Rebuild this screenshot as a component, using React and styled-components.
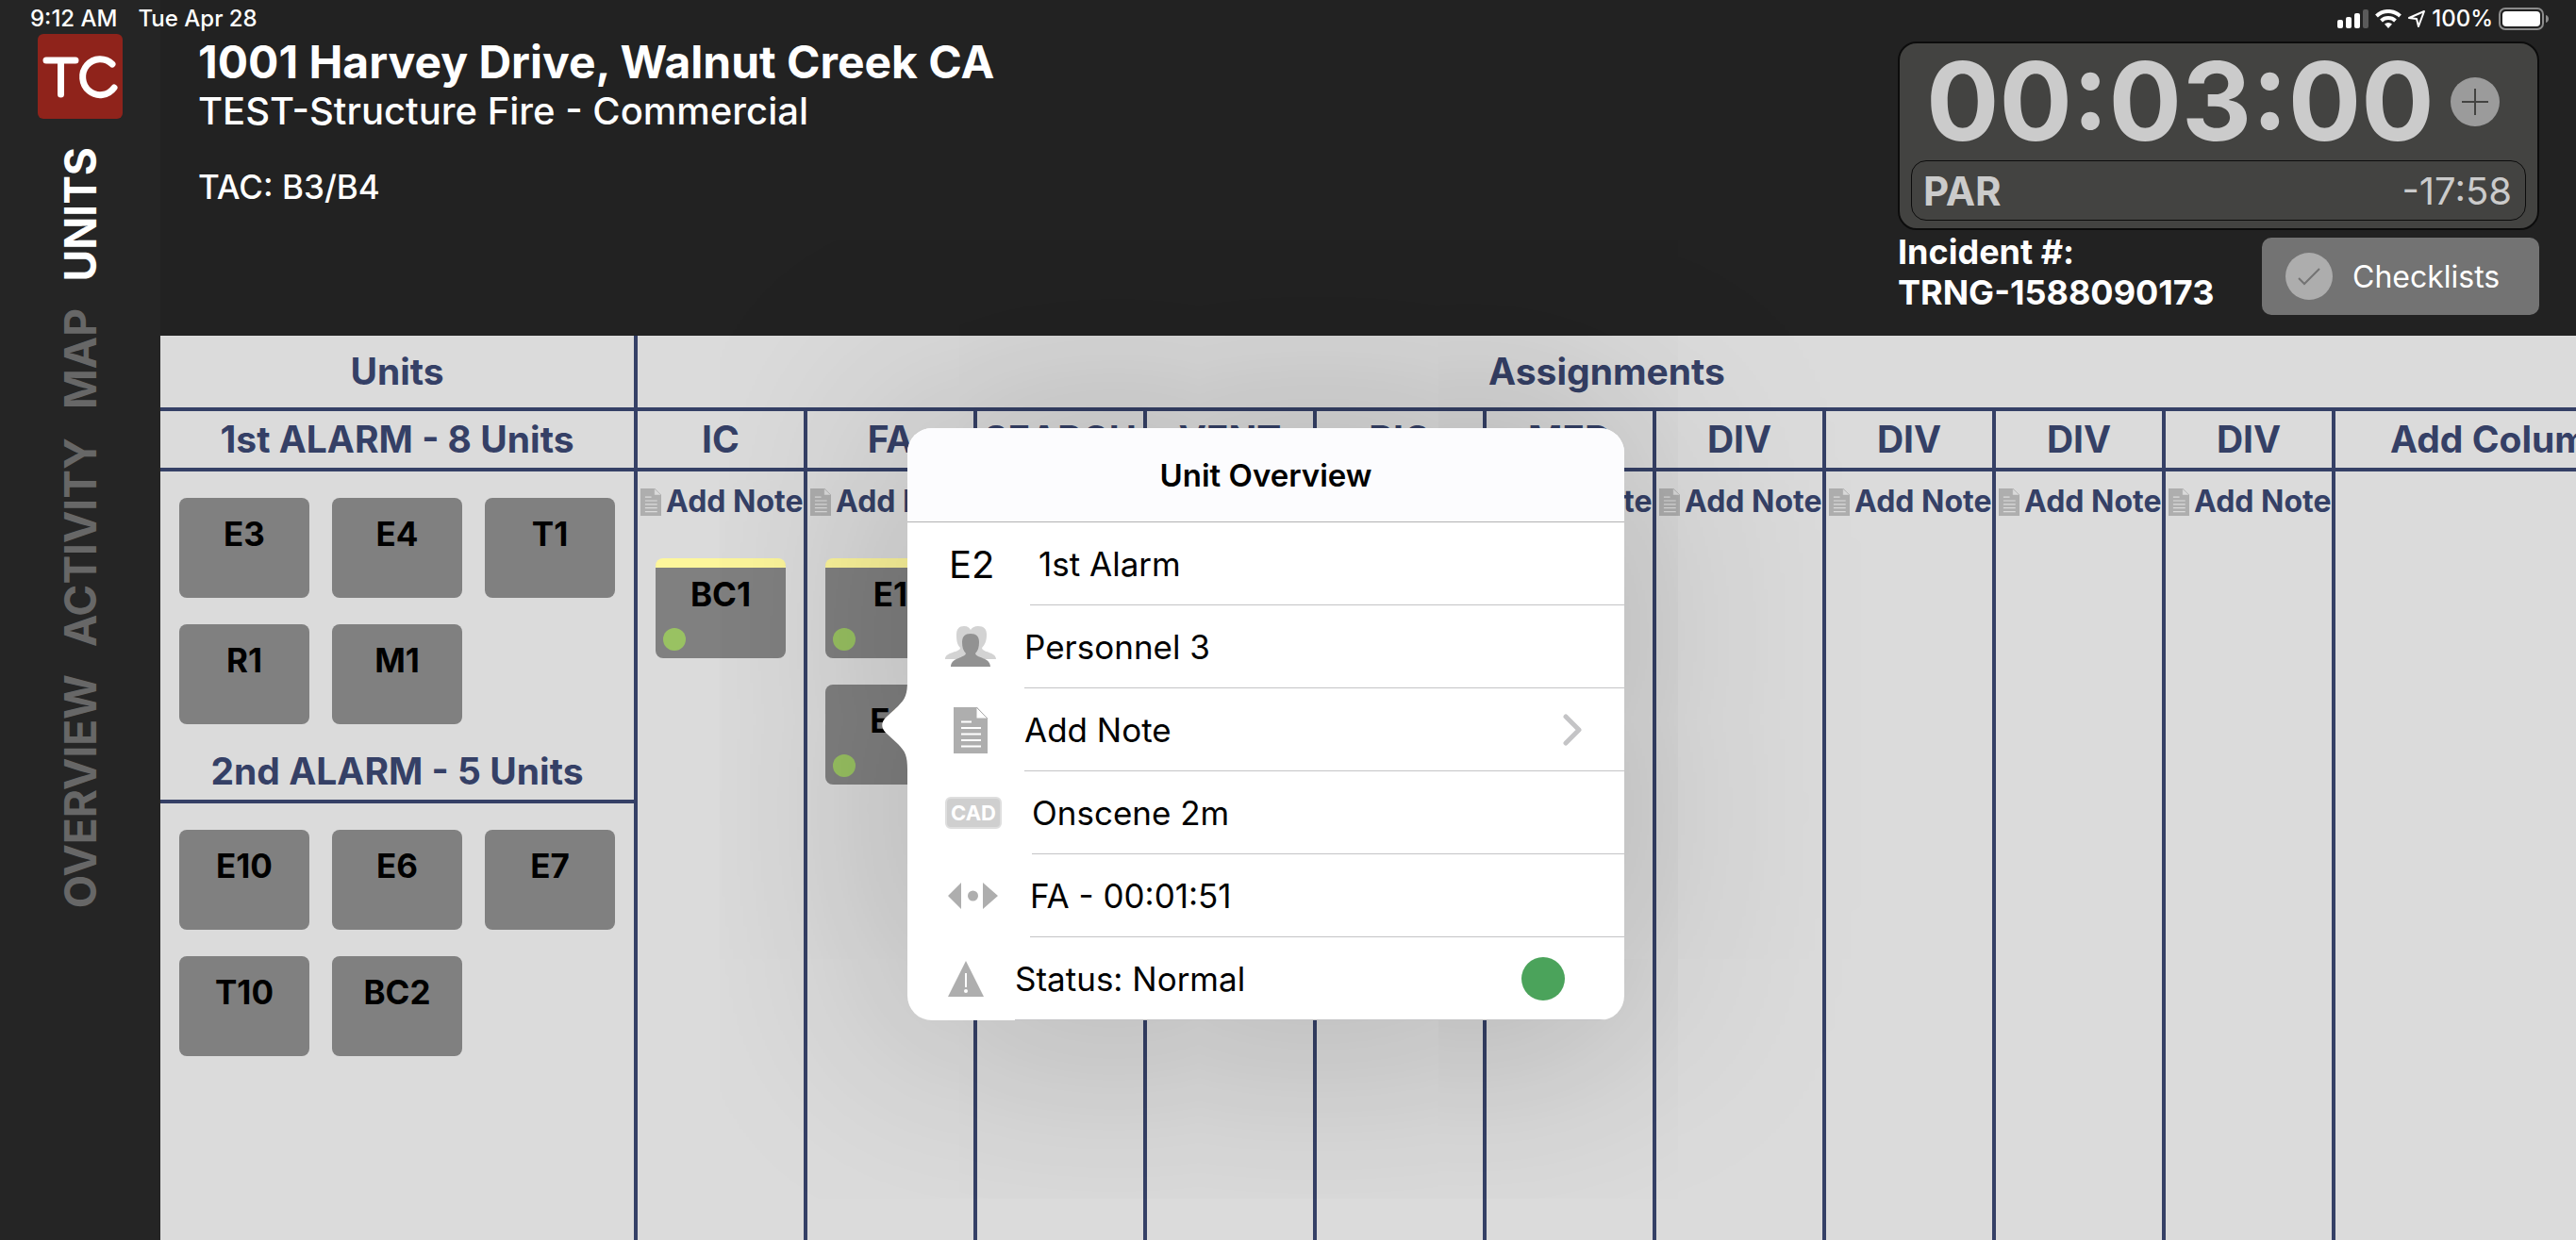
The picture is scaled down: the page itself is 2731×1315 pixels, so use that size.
import React from 'react';
import styled, { createGlobalStyle, css } from 'styled-components';

const colors = {
  navy: '#354066',
  board: '#dbdbdb',
  header: '#222222',
  sidebar: '#252525',
  card: '#808080',
  icon: '#aeaeae'
};

const GlobalStyle = createGlobalStyle`
  * {
    box-sizing: border-box;
  }

  body {
    margin: 0;
    background: ${colors.board};
    font-family: Inter, 'Liberation Sans', sans-serif;
    overflow: hidden;
  }

  h1, h2, h3, p, ul {
    margin: 0;
    padding: 0;
    list-style: none;
  }

  button {
    border: 0;
    padding: 0;
    background: none;
    color: inherit;
    font: inherit;
    cursor: pointer;
  }
`;

const Page = styled.div`
  display: flex;
  flex-direction: column;
  height: 100vh;
`;

const StatusBar = styled.div`
  display: flex;
  flex: none;
  justify-content: space-between;
  padding: 6px 28px 2px 32px;
  background: linear-gradient(90deg, ${colors.sidebar} 170px, ${colors.header} 170px);
  color: #fff;
  font-size: 24px;
  font-weight: 500;
  line-height: 28px;
`;

const StatusGroup = styled.div`
  display: flex;
  align-items: center;
  gap: ${({ gap }) => gap}px;
`;

const Body = styled.div`
  display: flex;
  flex: 1;
  min-height: 0;
`;

const Sidebar = styled.aside`
  display: flex;
  flex: none;
  flex-direction: column;
  align-items: center;
  width: 170px;
  background: ${colors.sidebar};
`;

const Logo = styled.svg`
  display: block;
  width: 90px;
  height: 90px;
`;

const Nav = styled.nav`
  display: flex;
  flex-direction: column;
  align-items: center;
  gap: 29px;
  padding-top: 30px;
`;

const NavLink = styled.a`
  color: ${({ $active }) => ($active ? '#fff' : '#676767')};
  font-size: 46px;
  font-weight: 700;
  line-height: 56px;
  text-decoration: none;
  writing-mode: vertical-rl;
  transform: rotate(180deg);
`;

const Main = styled.main`
  display: flex;
  flex: 1;
  flex-direction: column;
  min-width: 0;
`;

const Header = styled.header`
  display: flex;
  flex: none;
  justify-content: space-between;
  height: 320px;
  padding: 8px 39px 0 40px;
  background: ${colors.header};
  color: #fff;
`;

const Title = styled.h1`
  font-size: 48px;
  font-weight: 700;
  line-height: 44px;
`;

const Subtitle = styled.p`
  padding-top: 5px;
  font-size: 40px;
  font-weight: 500;
  line-height: 50px;
`;

const Tac = styled.p`
  padding-top: 30px;
  font-size: 35px;
  font-weight: 500;
  line-height: 50px;
`;

const Tools = styled.div`
  width: 680px;
`;

const TimerPanel = styled.section`
  padding: 0 12px 8px;
  border: 2px solid #0c0c0c;
  border-radius: 20px;
  background: #434341;
  color: #cbcbcb;
`;

const TimerRow = styled.div`
  display: flex;
  align-items: center;
  justify-content: space-between;
  height: 124px;
  padding: 0 28px 0 16px;
`;

const Clock = styled.span`
  font-size: 115px;
  font-weight: 700;
  line-height: 124px;
`;

const RoundIcon = styled.svg`
  display: block;
  width: 52px;
  height: 52px;
`;

const ParRow = styled.div`
  display: flex;
  align-items: center;
  justify-content: space-between;
  height: 64px;
  padding: 0 14px 0 12px;
  border: 1px solid #0c0c0c;
  border-radius: 16px;
  font-size: 40px;
`;

const ParLabel = styled.span`
  font-size: 42px;
  font-weight: 700;
`;

const IncidentRow = styled.div`
  display: flex;
  align-items: flex-end;
  justify-content: space-between;
`;

const Incident = styled.p`
  padding-bottom: 2px;
  font-size: 36px;
  font-weight: 700;
  line-height: 43px;
  white-space: nowrap;
`;

const ChecklistsButton = styled.button`
  display: flex;
  align-items: center;
  gap: 20px;
  width: 294px;
  height: 82px;
  margin-top: 8px;
  padding-left: 24px;
  border-radius: 10px;
  background: #737373;
  font-size: 32px;
`;

const Board = styled.div`
  display: flex;
  flex: 1;
  min-height: 0;
  background: ${colors.board};
  color: ${colors.navy};
`;

const UnitsColumn = styled.section`
  flex: none;
  width: 506px;
  border-right: 4px solid ${colors.navy};
`;

const Heading = styled.h2`
  height: ${({ $tall }) => ($tall ? 80 : 64)}px;
  padding-top: ${({ $tall }) => ($tall ? 8 : 0)}px;
  border-bottom: 4px solid ${colors.navy};
  font-size: 39px;
  font-weight: 700;
  line-height: 60px;
  text-align: center;
  white-space: nowrap;
`;

const UnitGrid = styled.ul`
  display: grid;
  grid-template-columns: repeat(3, 138px);
  gap: 28px 24px;
  padding: 28px 20px 20px;
`;

const UnitItem = styled.li`
  position: relative;
`;

const UnitCard = styled.button`
  display: flex;
  flex-direction: column;
  align-items: center;
  justify-content: space-between;
  width: 138px;
  height: 106px;
  padding: ${({ $noted }) => ($noted ? 6 : 16)}px 8px 8px;
  border-radius: 8px;
  background: ${colors.card};
  color: #000;
  font-size: 35px;
  font-weight: 700;
  line-height: 44px;

  ${({ $noted }) =>
    $noted &&
    css`
      border-top: 10px solid #fdf69b;
    `}
`;

const OnsceneDot = styled.span`
  align-self: flex-start;
  width: 24px;
  height: 24px;
  border-radius: 50%;
  background: #99c262;
`;

const Assignments = styled.section`
  display: flex;
  flex: 1;
  flex-direction: column;
  min-width: 0;
`;

const Columns = styled.div`
  display: flex;
  flex: 1;
`;

const Column = styled.section`
  flex: none;
  width: 180px;
  border-right: 4px solid ${colors.navy};
`;

const AddColumn = styled.section`
  flex: 1;
  min-width: 0;
`;

const AddColumnHeading = styled(Heading)`
  padding-left: 58px;
  text-align: left;
`;

const AddNoteButton = styled.button`
  display: flex;
  align-items: center;
  gap: 5px;
  width: 100%;
  margin-top: 12px;
  padding-left: 3px;
  font-size: 32px;
  font-weight: 700;
  line-height: 40px;
  white-space: nowrap;
`;

const Stack = styled.ul`
  display: grid;
  justify-content: center;
  gap: 28px;
  padding: 40px 0 0;
`;

const Svg = styled.svg`
  display: block;
  flex: none;
`;

/* Opens to the right of the unit it describes. */
const Popover = styled.section`
  position: absolute;
  z-index: 2;
  top: -272px;
  left: 87px;
  width: 760px;
  border-radius: 26px;
  background: #fff;
  box-shadow: 0 0 240px rgba(0, 0, 0, 0.28);
  color: #000;
`;

const Arrow = styled.svg`
  position: absolute;
  top: 268px;
  left: -27px;
  width: 28px;
  height: 94px;
`;

const PopoverTitle = styled.h3`
  height: 100px;
  border-bottom: 1px solid #b2b2b2;
  border-radius: 26px 26px 0 0;
  background: #fcfcfe;
  font-size: 33px;
  font-weight: 600;
  line-height: 100px;
  text-align: center;
`;

const Rows = styled.ul`
  border-radius: 0 0 26px 26px;
  overflow: hidden;
`;

const Row = styled.li`
  display: flex;
  align-items: center;
  height: 88px;
  padding-left: ${({ $start }) => $start}px;
  font-size: 35px;
`;

const RowText = styled.div`
  display: flex;
  flex: 1;
  align-items: center;
  justify-content: space-between;
  height: 88px;
  margin-left: ${({ $gap }) => $gap}px;
  padding: 0 ${({ $end }) => $end || 0}px 0 ${({ $indent }) => $indent || 0}px;
  border-bottom: 1px solid #c4c4c6;
`;

const UnitCode = styled.span`
  width: 46px;
  font-size: 40px;
`;

const CadBadge = styled.span`
  width: 60px;
  border: 2px solid #dedede;
  border-radius: 6px;
  background: #cfcfcf;
  color: #fff;
  font-size: 22px;
  font-weight: 700;
  line-height: 30px;
  text-align: center;
`;

const StatusDot = styled.span`
  width: 46px;
  height: 46px;
  border-radius: 50%;
  background: #4ba35b;
`;

function NoteIcon({ width, height, lines }) {
  return (
    <Svg width={width} height={height} viewBox="0 0 36 49" preserveAspectRatio="none" aria-hidden="true">
      <path fill={colors.icon} d="M0 0h25l11 12v37H0z" />
      <path fill={lines} stroke={colors.icon} d="M24 0v12h12z" />
      <path stroke={lines} strokeWidth="2" d="M8 15.500h11M8 22h21M8 28.500h21M8 35h21M8 41.500h21" />
    </Svg>
  );
}

function PersonnelIcon() {
  return (
    <Svg width="54" height="44" viewBox="0 0 54 44" aria-hidden="true">
      <path
        fill="#d3d3d3"
        d="M12 9c0-6 3-9 8-9 4 0 6 2 7 4 1-2 4-4 8-4 6 0 9 3 9 9 0 7-2 11-5 14 0 5 15 4 15 12H0c0-8 16-7 16-12-3-3-4-7-4-14z"
      />
      <path
        fill="#929292"
        d="M18 17c0-6 3-9 9-9s9 3 9 9c0 5-1 9-4 12 1 5 16 4 16 14H6c0-10 15-9 16-14-3-3-4-7-4-12z"
      />
    </Svg>
  );
}

function MoveIcon() {
  return (
    <Svg width="53" height="28" viewBox="0 0 53 28" fill={colors.icon} aria-hidden="true">
      <path d="M0 14 14 0v28zM53 14 37 0v28z" />
      <circle cx="26.500" cy="14" r="5.500" />
    </Svg>
  );
}

function WarningIcon() {
  return (
    <Svg width="38" height="38" viewBox="0 0 38 38" aria-hidden="true">
      <path fill={colors.icon} d="M19 0l19 38H0z" />
      <path stroke="#fff" strokeWidth="2" d="M19 13v15" />
      <circle fill="#fff" cx="19" cy="32" r="2" />
    </Svg>
  );
}

function Chevron() {
  return (
    <Svg width="20" height="34" viewBox="0 0 20 34" fill="none" aria-hidden="true">
      <path d="M3 3l14 14L3 31" stroke="#c4c4c6" strokeWidth="5" strokeLinecap="round" strokeLinejoin="round" />
    </Svg>
  );
}

function SystemIcons() {
  return (
    <>
      <Svg width="34" height="20" viewBox="0 0 34 20" fill="#fff" aria-hidden="true">
        <rect y="11" width="6" height="9" rx="2" />
        <rect x="9" y="8" width="6" height="12" rx="2" />
        <rect x="18" y="4" width="6" height="16" rx="2" />
        <rect x="27" width="6" height="20" rx="2" fill="#5a5a5a" />
      </Svg>
      <Svg width="28" height="20" viewBox="0 0 28 20" aria-hidden="true">
        <path fill="none" stroke="#fff" strokeWidth="4" d="M1.500 7a18 18 0 0 1 25 0M6.500 12a11 11 0 0 1 15 0" />
        <path fill="#fff" d="M14 20l-4-4.500a6 6 0 0 1 8 0z" />
      </Svg>
      <Svg width="20" height="20" viewBox="0 0 20 20" fill="none" aria-hidden="true">
        <path stroke="#fff" strokeWidth="2" strokeLinejoin="round" d="M2 9 18 2l-6 16-2-8z" />
      </Svg>
    </>
  );
}

function Battery() {
  return (
    <Svg width="54" height="24" viewBox="0 0 54 24" aria-hidden="true">
      <rect x="1" y="1" width="46" height="22" rx="6" fill="none" stroke="#8c8c8c" strokeWidth="2" />
      <rect x="4" y="4" width="40" height="16" rx="4" fill="#fff" />
      <path fill="#8c8c8c" d="M50 8c4 1 4 7 0 8z" />
    </Svg>
  );
}

function Unit({ name, noted, onscene, children }) {
  return (
    <UnitItem>
      <UnitCard type="button" $noted={noted}>
        {name}
        {onscene && <OnsceneDot />}
      </UnitCard>
      {children}
    </UnitItem>
  );
}

function UnitOverview() {
  return (
    <Popover>
      <Arrow viewBox="0 0 28 94" aria-hidden="true">
        <path fill="#fff" d="M28 0h-1c0 14-2 19-10 27L4 39c-5 5-5 11 0 16l13 12c8 8 10 13 10 27h1z" />
      </Arrow>
      <PopoverTitle>Unit Overview</PopoverTitle>
      <Rows>
        <Row $start={44}>
          <UnitCode>E2</UnitCode>
          <RowText $gap={40} $indent={9}>1st Alarm</RowText>
        </Row>
        <Row $start={40}>
          <PersonnelIcon />
          <RowText $gap={30}>Personnel 3</RowText>
        </Row>
        <Row $start={49}>
          <NoteIcon width={36} height={49} lines="#fff" />
          <RowText $gap={39} $end={45}>
            Add Note
            <Chevron />
          </RowText>
        </Row>
        <Row $start={40}>
          <CadBadge>CAD</CadBadge>
          <RowText $gap={32}>Onscene 2m</RowText>
        </Row>
        <Row $start={43}>
          <MoveIcon />
          <RowText $gap={34}>FA - 00:01:51</RowText>
        </Row>
        <Row $start={43}>
          <WarningIcon />
          <RowText $gap={33} $end={63}>
            Status: Normal
            <StatusDot />
          </RowText>
        </Row>
      </Rows>
    </Popover>
  );
}

const navItems = ['UNITS', 'MAP', 'ACTIVITY', 'OVERVIEW'];

const alarms = [
  { title: '1st ALARM - 8 Units', units: ['E3', 'E4', 'T1', 'R1', 'M1'] },
  { title: '2nd ALARM - 5 Units', units: ['E10', 'E6', 'E7', 'T10', 'BC2'] }
];

const columns = [
  { title: 'IC', units: [{ name: 'BC1', noted: true }] },
  { title: 'FA', units: [{ name: 'E1', noted: true }, { name: 'E2', selected: true }] },
  { title: 'SEARCH' },
  { title: 'VENT' },
  { title: 'RIC' },
  { title: 'MED' },
  { title: 'DIV' },
  { title: 'DIV' },
  { title: 'DIV' },
  { title: 'DIV' }
];

function App() {
  return (
    <Page>
      <GlobalStyle />
      <StatusBar>
        <StatusGroup gap={22}>
          <span>9:12 AM</span>
          <span>Tue Apr 28</span>
        </StatusGroup>
        <StatusGroup gap={6}>
          <SystemIcons />
          <span>100%</span>
          <Battery />
        </StatusGroup>
      </StatusBar>
      <Body>
        <Sidebar>
          <Logo viewBox="0 0 90 90" role="img" aria-label="TC">
            <rect width="90" height="90" rx="6" fill="#8f231b" />
            <g fill="none" stroke="#fff" strokeWidth="7" strokeLinecap="round">
              <path d="M9 28h31M24.500 28v36" />
              <path d="M79 32a18.500 19 0 1 0 2 25" />
            </g>
          </Logo>
          <Nav>
            {navItems.map((item, index) => (
              <NavLink key={item} href={`#${item.toLowerCase()}`} $active={index === 0}>
                {item}
              </NavLink>
            ))}
          </Nav>
        </Sidebar>
        <Main>
          <Header>
            <div>
              <Title>1001 Harvey Drive, Walnut Creek CA</Title>
              <Subtitle>TEST-Structure Fire - Commercial</Subtitle>
              <Tac>TAC: B3/B4</Tac>
            </div>
            <Tools>
              <TimerPanel>
                <TimerRow>
                  <Clock>00:03:00</Clock>
                  <button type="button" aria-label="Add timer">
                    <RoundIcon viewBox="0 0 52 52">
                      <circle cx="26" cy="26" r="26" fill="#9b9b9b" />
                      <path d="M12 26h28M26 12v28" stroke="#434341" strokeWidth="2" />
                    </RoundIcon>
                  </button>
                </TimerRow>
                <ParRow>
                  <ParLabel>PAR</ParLabel>
                  <span>-17:58</span>
                </ParRow>
              </TimerPanel>
              <IncidentRow>
                <Incident>
                  Incident #:
                  <br />
                  TRNG-1588090173
                </Incident>
                <ChecklistsButton type="button">
                  <RoundIcon viewBox="0 0 52 52" aria-hidden="true">
                    <circle cx="26" cy="26" r="25" fill="#adadad" />
                    <path d="M15 28l6 6 16-16" fill="none" stroke="#737373" strokeWidth="2" />
                  </RoundIcon>
                  Checklists
                </ChecklistsButton>
              </IncidentRow>
            </Tools>
          </Header>
          <Board>
            <UnitsColumn>
              <Heading $tall>Units</Heading>
              {alarms.map(({ title, units }) => (
                <React.Fragment key={title}>
                  <Heading as="h3">{title}</Heading>
                  <UnitGrid>
                    {units.map((name) => (
                      <Unit key={name} name={name} />
                    ))}
                  </UnitGrid>
                </React.Fragment>
              ))}
            </UnitsColumn>
            <Assignments>
              <Heading $tall>Assignments</Heading>
              <Columns>
                {columns.map(({ title, units = [] }, index) => (
                  <Column key={index}>
                    <Heading as="h3">{title}</Heading>
                    <AddNoteButton type="button">
                      <NoteIcon width={22} height={29} lines={colors.board} />
                      Add Note
                    </AddNoteButton>
                    <Stack>
                      {units.map(({ name, noted, selected }) => (
                        <Unit key={name} name={name} noted={noted} onscene>
                          {selected && <UnitOverview />}
                        </Unit>
                      ))}
                    </Stack>
                  </Column>
                ))}
                <AddColumn>
                  <AddColumnHeading as="h3">Add Column</AddColumnHeading>
                </AddColumn>
              </Columns>
            </Assignments>
          </Board>
        </Main>
      </Body>
    </Page>
  );
}

export default App;
